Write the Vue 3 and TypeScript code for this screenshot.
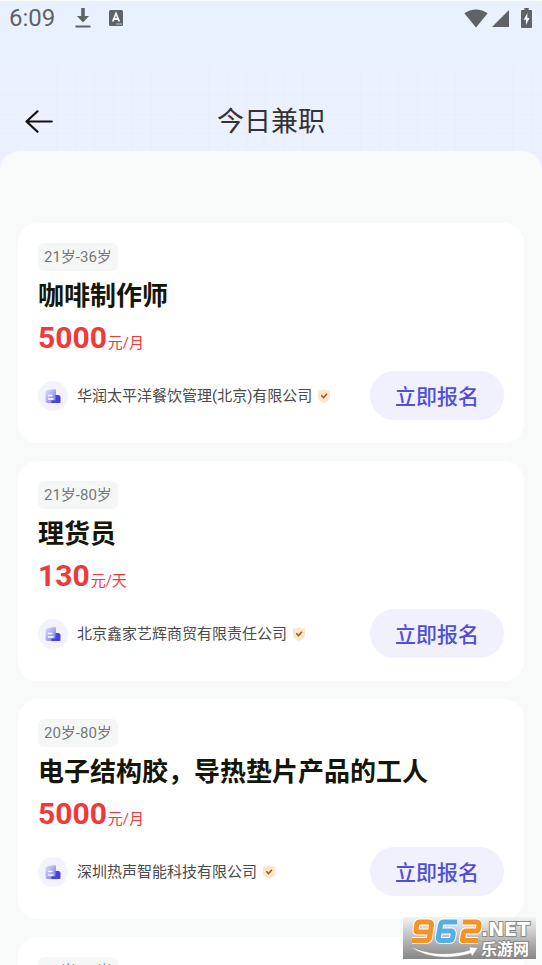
<script setup lang="ts">
interface Job {
  age: string
  title?: string
  pay?: string
  unit?: string
  company?: string
}

const jobs: Job[] = [
  { age: '21岁-36岁', title: '咖啡制作师', pay: '5000', unit: '元/月', company: '华润太平洋餐饮管理(北京)有限公司' },
  { age: '21岁-80岁', title: '理货员', pay: '130', unit: '元/天', company: '北京鑫家艺辉商贸有限责任公司' },
  { age: '20岁-80岁', title: '电子结构胶，导热垫片产品的工人', pay: '5000', unit: '元/月', company: '深圳热声智能科技有限公司' },
  { age: '18岁-45岁' },
]
</script>

<template>
  <div class="screen">
    <header class="top">
      <div class="status">
        <span class="clock">6:09</span>
        <svg class="download" width="16" height="20" viewBox="0 0 16 20" aria-hidden="true">
          <path d="M6.200 0h3.600v8H14l-6 6.500L2 8h4.200zM.5 17.500h15v2H.5z" fill="#5f6267" />
        </svg>
        <svg class="keyboard" width="14" height="16" viewBox="0 0 14 16" aria-hidden="true">
          <rect width="14" height="16" rx="1.500" fill="#5f6267" />
          <path d="M3.700 11.500 7 3.500l3.300 8M4.800 9h4.400" fill="none" stroke="#f2f5fd" stroke-width="1.800" />
          <path d="M7 14h6" stroke="#c4c7cf" stroke-width="1" />
        </svg>
        <span class="spacer"></span>
        <svg width="24" height="19" viewBox="0 0 24 19" aria-hidden="true">
          <path d="M12 18.500.3 4.300C3.800 1.700 7.700.4 12 .4s8.200 1.300 11.700 3.900z" fill="#5f6267" />
        </svg>
        <svg class="signal" width="17" height="17" viewBox="0 0 17 17" aria-hidden="true">
          <path d="M17 0v17H0z" fill="#5f6267" />
        </svg>
        <svg class="battery" width="11" height="20" viewBox="0 0 11 20" aria-hidden="true">
          <path d="M3.300 0h4.400v2H10a1 1 0 0 1 1 1v16a1 1 0 0 1-1 1H1a1 1 0 0 1-1-1V3a1 1 0 0 1 1-1h2.300z" fill="#5f6267" />
          <path d="M6.400 5 2.700 11.800h2.200V17l3.700-7H6.400z" fill="#f4f7ff" />
        </svg>
      </div>
      <div class="nav">
        <button class="back" type="button" aria-label="返回">
          <svg width="28" height="24" viewBox="0 0 28 24" aria-hidden="true">
            <path d="M12.500 1.300 1.500 11.500l11 10.200M1.500 11.500h25.300" fill="none" stroke="#111" stroke-width="2.200" stroke-linecap="round" stroke-linejoin="round" />
          </svg>
        </button>
        <h1>今日兼职</h1>
      </div>
    </header>

    <main class="sheet">
      <article v-for="job in jobs" :key="job.age" class="card">
        <span class="age">{{ job.age }}</span>
        <template v-if="job.title">
          <h2>{{ job.title }}</h2>
          <p class="pay"><strong>{{ job.pay }}</strong><span>{{ job.unit }}</span></p>
          <footer class="foot">
            <svg class="logo" width="30" height="30" viewBox="0 0 30 30" aria-hidden="true">
              <defs>
                <linearGradient id="building" x1="0" y1="0" x2="1" y2="1">
                  <stop offset="0" stop-color="#dfe0fc" />
                  <stop offset="1" stop-color="#7476ef" />
                </linearGradient>
              </defs>
              <circle cx="15" cy="15" r="15" fill="#f3f3fe" />
              <path d="M7.500 10.500 9 9.300l8-1.300 1 1v13H9.500a2 2 0 0 1-2-2z" fill="url(#building)" />
              <path d="M17.500 14h3.500l1.500 1.500V21a1 1 0 0 1-1 1h-8v-2.500h4z" fill="#4543dc" />
              <path d="M10 14.500h4.500M10 18h5.500" stroke="#fff" stroke-width="1.300" />
            </svg>
            <span class="company">{{ job.company }}</span>
            <svg class="badge" width="12" height="14" viewBox="0 0 12 14" aria-hidden="true">
              <path d="M6 0c1.500 1 3.500 1.500 6 1.500V8c0 2.800-2.500 4.700-6 6-3.500-1.300-6-3.200-6-6V1.500C2.500 1.500 4.500 1 6 0z" fill="#fde6c8" />
              <path d="m3.300 6.300 2.200 2.300 3.500-3.900" fill="none" stroke="#a0561f" stroke-width="1.500" />
            </svg>
            <button class="apply" type="button">立即报名</button>
          </footer>
        </template>
      </article>
    </main>

    <svg class="mark" width="133" height="42" viewBox="0 0 133 42" role="img" aria-label="962.NET 乐游网">
      <defs>
        <linearGradient id="plate" x1="0" y1="0" x2="0" y2="1">
          <stop offset="0" stop-color="#f3f3f3" />
          <stop offset=".5" stop-color="#bcbcbc" />
          <stop offset="1" stop-color="#858585" />
        </linearGradient>
      </defs>
      <rect width="133" height="42" fill="url(#plate)" />
      <g fill="none" stroke-linejoin="round">
        <g stroke="#fff" stroke-width="7">
          <path d="M27 15H14.500Q12.500 15 13 12.500L13.800 7.500Q14.200 5 17 5H26Q29 5 28.500 8L26.500 20.500Q26 23.500 23 23.500H9" />
          <path d="M54 5H41Q38 5 37.500 8L35.300 20.500Q35 23.500 38 23.500H46Q49 23.500 49.500 21L50.300 16.500Q50.500 14 48 14H36.500" />
          <path d="M60 5H73.500Q76.500 5 76 8L75.500 11.500Q75 14 72.500 14H63.500Q61 14 60.500 16.500L59.300 23.500H75" />
        </g>
        <g stroke="#f59425" stroke-width="5">
          <path d="M27 15H14.500Q12.500 15 13 12.500L13.800 7.500Q14.200 5 17 5H26Q29 5 28.500 8L26.500 20.500Q26 23.500 23 23.500H9" />
          <path d="M60 5H73.500Q76.500 5 76 8L75.500 11.500Q75 14 72.500 14H63.500Q61 14 60.500 16.500L59.300 23.500H75" />
        </g>
        <path d="M54 5H41Q38 5 37.500 8L35.300 20.500Q35 23.500 38 23.500H46Q49 23.500 49.500 21L50.300 16.500Q50.500 14 48 14H36.500" stroke="#55aee5" stroke-width="5" />
      </g>
      <path d="M7 29c17 9 40 10 60 4l-1-3 9 .5-6 9-1-3C46 43 21 41 7 29z" fill="#fff" stroke="#888" stroke-width=".5" />
      <text class="net" x="78" y="19">.NET</text>
      <text class="site" x="78" y="38">乐游网</text>
    </svg>
  </div>
</template>

<style>
body {
  margin: 0;
}
</style>

<style scoped>
.screen {
  position: relative;
  display: flex;
  flex-direction: column;
  height: 100vh;
  overflow: hidden;
  box-sizing: border-box;
  border-top: 1px solid #f7f8fa;
  font-family: Roboto, "Noto Sans CJK SC", sans-serif;
  background:
    repeating-linear-gradient(90deg, transparent 0 18px, rgba(215, 224, 250, 0.15) 18px 19px),
    repeating-linear-gradient(transparent 0 18px, rgba(215, 224, 250, 0.15) 18px 19px),
    #ecf1ff;
}
.top {
  flex: none;
  background: linear-gradient(#e9f1ff 40px, transparent 80px);
}
.status {
  display: flex;
  align-items: center;
  height: 34px;
  padding: 0 10px 0 9px;
}
.clock {
  font-size: 24px;
  line-height: 36px;
  color: #5f6267;
}
.download {
  margin-left: 20px;
}
.keyboard {
  margin-left: 18px;
}
.spacer {
  flex: 1;
}
.signal {
  margin-left: 4px;
}
.battery {
  margin-left: 12px;
}
.nav {
  display: grid;
  grid-template-columns: 28px 1fr 28px;
  align-items: center;
  padding: 67px 25px 9px;
}
.back {
  display: flex;
  padding: 0;
  border: 0;
  background: none;
}
h1 {
  margin: 0;
  text-align: center;
  font-size: 27px;
  line-height: 40px;
  font-weight: 400;
  color: #333;
}
.sheet {
  flex: 1;
  display: flex;
  flex-direction: column;
  gap: 18px;
  padding: 72px 18px 0;
  border-radius: 20px 20px 0 0;
  background: #f8faf9;
}
.card {
  flex: none;
  display: flex;
  flex-direction: column;
  align-items: flex-start;
  box-sizing: border-box;
  min-height: 220px;
  padding: 20px;
  border-radius: 20px;
  background: #fff;
}
.age {
  padding: 0 6px;
  border-radius: 6px;
  background: #f5f7f7;
  font-size: 15px;
  line-height: 28px;
  color: #777;
}
h2 {
  margin: 7px 0 0;
  font-size: 26px;
  line-height: 36px;
  font-weight: 700;
  color: #151508;
}
.pay {
  display: flex;
  align-items: baseline;
  margin: 6px 0 0;
  line-height: 36px;
  color: #ee3a3a;
}
.pay strong {
  font-size: 30px;
  font-weight: 700;
}
.pay span {
  margin-left: 1px;
  font-size: 15px;
  font-weight: 400;
}
.foot {
  display: flex;
  align-items: center;
  align-self: stretch;
  margin-top: 10px;
}
.company {
  margin-left: 9px;
  font-size: 15px;
  line-height: 24px;
  color: #4a4a4a;
  white-space: nowrap;
}
.badge {
  margin-left: 6px;
}
.apply {
  margin-left: auto;
  padding: 4px 25px 0;
  border: 0;
  border-radius: 25px;
  background: #f1f1fe;
  font-family: inherit;
  font-size: 21px;
  line-height: 45px;
  font-weight: 500;
  color: #504fdb;
}
.mark {
  position: absolute;
  right: 6px;
  bottom: 6px;
}
.net,
.site {
  fill: #fff;
  stroke: #888;
  stroke-width: 2px;
  paint-order: stroke;
  font-weight: 700;
}
.net {
  font-family: "DejaVu Sans", sans-serif;
  font-size: 19px;
}
.site {
  font-size: 16px;
}
</style>
